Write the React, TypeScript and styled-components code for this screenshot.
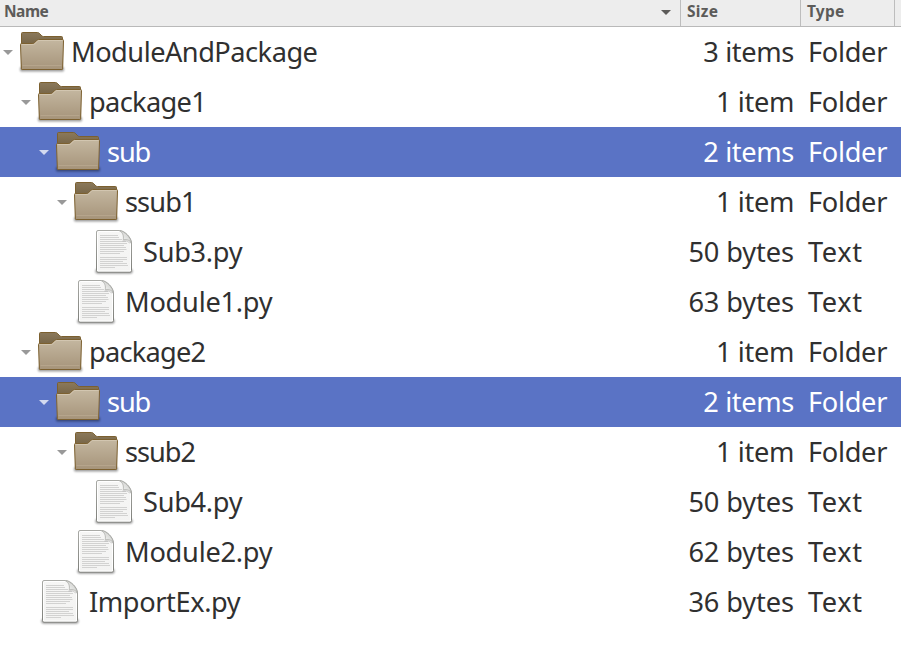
import React from "react";
import styled, { createGlobalStyle } from "styled-components";

const GlobalStyle = createGlobalStyle`
  body { margin: 0; background: #fff; }
`;

const Window = styled.main`
  width: 901px;
  height: 648px;
  overflow: hidden;
  background: #fff;
  color: #303030;
  font-family: "Noto Sans", sans-serif;
`;

const Header = styled.header`
  display: grid;
  grid-template-columns: 681px 120px 94px 6px;
  height: 26px;
  background: #ededed;
  border-bottom: 1px solid #b9b9b9;
`;

const HeaderCell = styled.div`
  display: flex;
  box-sizing: border-box;
  justify-content: space-between;
  padding: 0 9px 0 6px;
  border-right: 1px solid #bdbdbd;
  color: #5c5b59;
  font-size: 15.5px;
  font-weight: 700;
  line-height: 23px;

  &:first-child { padding-left: 4px; }
`;

const HeaderText = styled.span<{ $spacing: number }>`
  letter-spacing: ${(p) => p.$spacing}px;
`;

const SortArrow = styled.svg`
  width: 10px;
  height: 5px;
  margin-top: 10px;
`;

const Row = styled.div<{ $selected: boolean }>`
  display: grid;
  grid-template-columns: 681px 113px 107px;
  height: 50px;
  background: ${(p) => (p.$selected ? "#5a73c5" : "#fff")};
  color: ${(p) => (p.$selected ? "#fff" : "#303030")};
`;

const NameCell = styled.div<{ $depth: number }>`
  display: flex;
  align-items: center;
  padding-left: ${(p) => p.$depth * 18}px;
`;

const Expander = styled.svg<{ $selected: boolean }>`
  width: 18px;
  height: 50px;
  fill: ${(p) => (p.$selected ? "#d3daf0" : "#999")};
`;

const Icon = styled.svg`
  width: 48px;
  height: 48px;
  margin-right: 5px;
`;

const Label = styled.span<{ $spacing: number }>`
  display: block;
  height: 50px;
  font-size: 27.2px;
  line-height: 49px;
  white-space: pre;
  letter-spacing: ${(p) => p.$spacing}px;
`;

const SizeCell = styled.div`
  display: flex;
  justify-content: flex-end;
`;

const TypeCell = styled.div`
  padding-left: 14px;
`;

const Gradients = styled.svg`
  display: block;
  width: 0;
  height: 0;
`;

const textLines = [
  [7.5, 28], [9.5, 29], [11.5, 32], [13.5, 36], [15.5, 37], [17.5, 34],
  [19.5, 36], [21.5, 36.5], [23.5, 34], [25.5, 30],
  [29.5, 37], [31.5, 37], [33.5, 33], [35.5, 37], [37.5, 38], [39.5, 25],
];

const FolderIcon = () => (
  <Icon viewBox="0 0 48 48">
    <rect x="2" y="39" width="44" height="4.6" rx="1.5" fill="#000" opacity=".4" filter="url(#soft)" />
    <path d="M3.5 41V5.5q0-1 1-1H19.5q1 0 1.7.7l2.6 2.6q.7.7 1.7.7h18q1 0 1 1V41z" fill="url(#back)" stroke="#7c602f" />
    <path d="M2.5 16.5q0-1 1-1H14.8q1 0 1.6-.7l2.6-2.6q.7-.7 1.6-.7H44.5q1 0 1 1L44.7 40.5q0 1-1 1H4.3q-1 0-1-1z" fill="url(#front)" stroke="#7c602f" />
    <path d="M3.6 16.5H15.2q1 0 1.7-.8l2.5-2.4q.6-.8 1.5-.8H44.4" fill="none" stroke="#e2d6c2" strokeOpacity=".5" />
    <path d="M4.5 37.5h39" stroke="#d4c4ac" strokeOpacity=".3" />
  </Icon>
);

const FileIcon = () => (
  <Icon viewBox="0 0 48 48">
    <rect x="5.5" y="41" width="37" height="4.6" rx="1.8" fill="#000" opacity=".45" filter="url(#soft)" />
    <path d="M8 2.5H29.5C34.5 2.5 41.5 9.5 41.5 15V42.5q0 1.5-1.5 1.5H8q-1.5 0-1.5-1.5V4Q6.5 2.5 8 2.5z" fill="url(#page)" stroke="url(#edge)" />
    <path d="M8.3 3.5H29.5M7.5 4.3V43H40.5V15" fill="none" stroke="#fff" />
    {textLines.map(([y, end]) => (
      <path key={y} d={`M10 ${y}H${end}`} stroke="#d2d2d1" />
    ))}
    <path d="M29.5 2.8C34.5 3 41.2 9.8 41.2 15C40.3 12.4 37 11 33.2 11.7C34 8.5 32.7 4 29.5 2.8z" fill="url(#fold)" stroke="#a4a5a1" strokeWidth=".7" />
    <path d="M32.5 13Q38 12 40 15.5" fill="none" stroke="#777" strokeOpacity=".35" />
  </Icon>
);

type Entry = {
  name: string;
  depth: number;
  size: string;
  kind: "Folder" | "Text";
  selected?: boolean;
  spacing: number;
};

const entries: Entry[] = [
  { name: "ModuleAndPackage", depth: 0, size: "3 items", kind: "Folder", spacing: -0.5 },
  { name: "package1", depth: 1, size: "1 item", kind: "Folder", spacing: -0.65 },
  { name: "sub", depth: 2, size: "2 items", kind: "Folder", selected: true, spacing: -1.1 },
  { name: "ssub1", depth: 3, size: "1 item", kind: "Folder", spacing: -0.9 },
  { name: "Sub3.py", depth: 4, size: "50 bytes", kind: "Text", spacing: -0.3 },
  { name: "Module1.py", depth: 3, size: "63 bytes", kind: "Text", spacing: -0.25 },
  { name: "package2", depth: 1, size: "1 item", kind: "Folder", spacing: -0.75 },
  { name: "sub", depth: 2, size: "2 items", kind: "Folder", selected: true, spacing: -1.1 },
  { name: "ssub2", depth: 3, size: "1 item", kind: "Folder", spacing: -1 },
  { name: "Sub4.py", depth: 4, size: "50 bytes", kind: "Text", spacing: -0.3 },
  { name: "Module2.py", depth: 3, size: "62 bytes", kind: "Text", spacing: -0.25 },
  { name: "ImportEx.py", depth: 1, size: "36 bytes", kind: "Text", spacing: -0.4 },
];

const sizeSpacing = (size: string) => (size.endsWith("bytes") ? -0.1 : -0.35);

export default function App() {
  return (
    <Window>
      <GlobalStyle />
      <Gradients aria-hidden="true">
        <defs>
          <filter id="soft" x="-10%" y="-60%" width="120%" height="220%">
            <feGaussianBlur stdDeviation=".9" />
          </filter>
          <linearGradient id="back" x1="0" y1="0" x2="0" y2="1">
            <stop offset="0" stopColor="#8b795b" />
            <stop offset=".3" stopColor="#796748" />
            <stop offset="1" stopColor="#796748" />
          </linearGradient>
          <linearGradient id="front" x1="0" y1="0" x2="0" y2="1">
            <stop offset="0" stopColor="#c4b7a0" />
            <stop offset="1" stopColor="#a6947a" />
          </linearGradient>
          <linearGradient id="edge" x1="0" y1="0" x2="0" y2="1">
            <stop offset="0" stopColor="#aaaba7" />
            <stop offset="1" stopColor="#7e7f7a" />
          </linearGradient>
          <linearGradient id="page" x1="0" y1="0" x2="0" y2="1">
            <stop offset="0" stopColor="#f6f6f5" />
            <stop offset="1" stopColor="#f3f3f2" />
          </linearGradient>
          <linearGradient id="fold" x1="0" y1="1" x2="1" y2="0">
            <stop offset="0" stopColor="#fff" />
            <stop offset="1" stopColor="#c4c5c1" />
          </linearGradient>
        </defs>
      </Gradients>
      <Header>
        <HeaderCell>
          <HeaderText $spacing={-0.5}>Name</HeaderText>
          <SortArrow viewBox="0 0 10 5"><path d="M0 0h10L5 5z" fill="#5c5b59" /></SortArrow>
        </HeaderCell>
        <HeaderCell><HeaderText $spacing={0.3}>Size</HeaderText></HeaderCell>
        <HeaderCell><HeaderText $spacing={0.2}>Type</HeaderText></HeaderCell>
      </Header>
      {entries.map((e, i) => (
        <Row key={i} $selected={!!e.selected}>
          <NameCell $depth={e.depth}>
            <Expander viewBox="0 0 18 50" $selected={!!e.selected}>
              {e.kind === "Folder" && <path d="M3 23h10l-5 5z" />}
            </Expander>
            {e.kind === "Folder" ? <FolderIcon /> : <FileIcon />}
            <Label $spacing={e.spacing}>{e.name}</Label>
          </NameCell>
          <SizeCell><Label $spacing={sizeSpacing(e.size)}>{e.size}</Label></SizeCell>
          <TypeCell><Label $spacing={e.kind === "Text" ? 0.6 : -0.3}>{e.kind}</Label></TypeCell>
        </Row>
      ))}
    </Window>
  );
}
